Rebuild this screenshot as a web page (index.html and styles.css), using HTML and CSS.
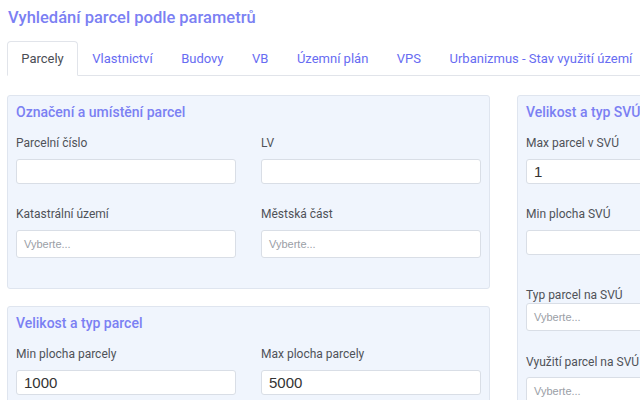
FILE: index.html
```html
<!DOCTYPE html>
<html lang="cs">
<head>
<meta charset="utf-8">
<title>Vyhledání parcel podle parametrů</title>
<link rel="stylesheet" href="styles.css">
</head>
<body>
<div class="page">
  <h1 class="title">Vyhledání parcel podle parametrů</h1>
  <ul class="tabs">
    <li class="tab active">Parcely</li>
    <li class="tab">Vlastnictví</li>
    <li class="tab">Budovy</li>
    <li class="tab">VB</li>
    <li class="tab">Územní plán</li>
    <li class="tab">VPS</li>
    <li class="tab">Urbanizmus - Stav využití území</li>
  </ul>
  <div class="columns">
    <div class="col-main">
      <section class="panel">
        <h2 class="panel-title">Označení a umístění parcel</h2>
        <div class="row">
          <div class="group">
            <label class="label">Parcelní číslo</label>
            <input class="input" type="text">
          </div>
          <div class="group">
            <label class="label">LV</label>
            <input class="input" type="text">
          </div>
        </div>
        <div class="row">
          <div class="group">
            <label class="label">Katastrální území</label>
            <div class="select">Vyberte...</div>
          </div>
          <div class="group">
            <label class="label">Městská část</label>
            <div class="select">Vyberte...</div>
          </div>
        </div>
      </section>
      <section class="panel">
        <h2 class="panel-title">Velikost a typ parcel</h2>
        <div class="row">
          <div class="group">
            <label class="label">Min plocha parcely</label>
            <input class="input" type="text" value="1000">
          </div>
          <div class="group">
            <label class="label">Max plocha parcely</label>
            <input class="input" type="text" value="5000">
          </div>
        </div>
      </section>
    </div>
    <div class="col-side">
      <section class="panel">
        <h2 class="panel-title">Velikost a typ SVÚ</h2>
        <div class="group">
          <label class="label">Max parcel v SVÚ</label>
          <input class="input" type="text" value="1">
        </div>
        <div class="group group-wide">
          <label class="label">Min plocha SVÚ</label>
          <input class="input" type="text">
        </div>
        <div class="group">
          <label class="label label-tight">Typ parcel na SVÚ</label>
          <div class="select">Vyberte...</div>
        </div>
        <div class="group">
          <label class="label label-mid">Využití parcel na SVÚ</label>
          <div class="select">Vyberte...</div>
        </div>
      </section>
    </div>
  </div>
</div>
</body>
</html>
```
FILE: styles.css
```css
* { box-sizing: border-box; }
html, body { margin: 0; padding: 0; background: #fff; overflow: hidden; }
body { font-family: Roboto, "Liberation Sans", Arial, sans-serif; }
.page { padding: 8px 7px 0 7px; width: 800px; }
.title {
  margin: 0 0 0 1px;
  font-size: 16.5px;
  line-height: 20px;
  font-weight: 500;
  color: #7b80f3;
}
.tabs {
  list-style: none;
  margin: 13px 0 0 0;
  padding: 0;
  display: flex;
  border-bottom: 1px solid #e1e4ea;
  width: 634px;
  white-space: nowrap;
}
.tab {
  font-size: 13px;
  line-height: 16px;
  padding: 9px 13.25px 8px;
  color: #676cf2;
  border: 1px solid transparent;
  border-top-left-radius: 4px;
  border-top-right-radius: 4px;
  margin-bottom: -1px;
}
.tab.active {
  color: #4a4d55;
  border-color: #e1e4ea #e1e4ea #fff;
  background: #fff;
}
.columns { display: flex; gap: 27px; margin-top: 19px; align-items: flex-start; }
.col-main { width: 483px; flex: none; display: flex; flex-direction: column; gap: 17px; }
.col-side { width: 241px; flex: none; }
.panel {
  background: #f0f5fd;
  border: 1px solid #dfe5ef;
  border-radius: 3px;
  padding: 8px 8px 8px 8px;
}
.panel-title {
  margin: 0 0 14px 0;
  font-size: 14px;
  line-height: 17px;
  font-weight: 500;
  color: #7b80f3;
}
.row { display: flex; gap: 25px; }
.row .group { flex: 1; }
.group { margin-bottom: 22px; display: flex; flex-direction: column; }
.group-wide { margin-bottom: 32px; }
.label {
  font-size: 12px;
  line-height: 16px;
  color: #4f5258;
  margin-bottom: 8px;
}
.label-tight { margin-bottom: 0; }
.label-mid { margin-bottom: 7px; }
.group-wide + .group { margin-bottom: 23px; }
.input {
  height: 25px;
  width: 100%;
  border: 1px solid #d9dee6;
  border-radius: 3px;
  background: #fff;
  padding: 0 7px;
  font-family: "Liberation Sans", Arial, sans-serif;
  font-size: 15px;
  color: #333;
  outline: none;
  margin: 0;
}
.select {
  height: 28px;
  border: 1px solid #d9dee6;
  border-radius: 3px;
  background: #fff;
  padding: 0 7px;
  font-family: "Liberation Sans", Arial, sans-serif;
  font-size: 11px;
  line-height: 26px;
  color: #9a9ea6;
}
```
